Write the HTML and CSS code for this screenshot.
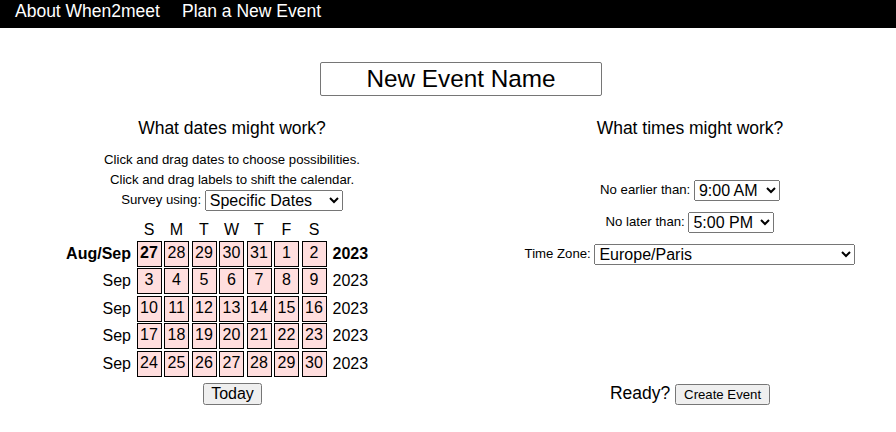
FILE: index.html
```html
<!DOCTYPE html>
<html>
<head>
<meta charset="utf-8">
<link rel="stylesheet" href="styles.css">
</head>
<body>
<div class="topbar">
  <a class="navlink" href="#">About When2meet</a>
  <a class="navlink" href="#">Plan a New Event</a>
</div>
<div class="name-row">
  <input class="name-input" type="text" value="New Event Name">
</div>
<div class="columns">
  <div class="col-left">
    <div class="heading">What dates might work?</div>
    <div class="hints">
      <div class="hint">Click and drag dates to choose possibilities.</div>
      <div class="hint">Click and drag labels to shift the calendar.</div>
    </div>
    <div class="survey">Survey using: <select class="sel sel-survey"><option>Specific Dates</option><option>Days of the Week</option></select></div>
    <div class="calendar">
      <div class="lbl"></div>
      <div class="dow">S</div><div class="dow">M</div><div class="dow">T</div><div class="dow">W</div><div class="dow">T</div><div class="dow">F</div><div class="dow">S</div>
      <div class="lbl"></div>

      <div class="mon bold">Aug/Sep</div>
      <div class="day bold">27</div><div class="day">28</div><div class="day">29</div><div class="day">30</div><div class="day">31</div><div class="day">1</div><div class="day">2</div>
      <div class="yr bold">2023</div>

      <div class="mon">Sep</div>
      <div class="day">3</div><div class="day">4</div><div class="day">5</div><div class="day">6</div><div class="day">7</div><div class="day">8</div><div class="day">9</div>
      <div class="yr">2023</div>

      <div class="mon">Sep</div>
      <div class="day">10</div><div class="day">11</div><div class="day">12</div><div class="day">13</div><div class="day">14</div><div class="day">15</div><div class="day">16</div>
      <div class="yr">2023</div>

      <div class="mon">Sep</div>
      <div class="day">17</div><div class="day">18</div><div class="day">19</div><div class="day">20</div><div class="day">21</div><div class="day">22</div><div class="day">23</div>
      <div class="yr">2023</div>

      <div class="mon">Sep</div>
      <div class="day">24</div><div class="day">25</div><div class="day">26</div><div class="day">27</div><div class="day">28</div><div class="day">29</div><div class="day">30</div>
      <div class="yr">2023</div>
    </div>
    <div class="today-row"><button class="btn btn-today">Today</button></div>
  </div>
  <div class="col-right">
    <div class="heading">What times might work?</div>
    <div class="times">
      <div class="trow">No earlier than: <select class="sel sel-time"><option>9:00 AM</option></select></div>
      <div class="trow">No later than: <select class="sel sel-time"><option>5:00 PM</option></select></div>
      <div class="trow">Time Zone: <select class="sel sel-tz"><option>Europe/Paris</option></select></div>
    </div>
    <div class="ready">Ready? <button class="btn btn-create">Create Event</button></div>
  </div>
</div>
</body>
</html>
```

FILE: styles.css
```css
html, body {
  margin: 0;
  padding: 0;
  background: #fff;
  overflow: hidden;
}
body {
  font-family: "Liberation Sans", Arial, sans-serif;
  color: #000;
  width: 896px;
  height: 432px;
}
.topbar {
  background: #000;
  height: 28px;
  display: flex;
  align-items: flex-start;
  gap: 22px;
  padding-left: 15px;
}
.navlink {
  color: #fff;
  text-decoration: none;
  font-size: 17.5px;
  line-height: 23px;
}
.name-row {
  display: flex;
  justify-content: center;
  margin-top: 34px;
  padding-left: 26px;
}
.name-input {
  box-sizing: border-box;
  width: 282px;
  height: 34px;
  border: 1px solid #767676;
  border-radius: 2px;
  font-family: "Liberation Sans", Arial, sans-serif;
  font-size: 24.3px;
  text-align: center;
  padding: 0;
  color: #000;
}
.columns {
  display: flex;
}
.col-left {
  width: 464px;
  flex: none;
}
.col-right {
  width: 432px;
  flex: none;
  padding-left: 20px;
  box-sizing: border-box;
}
.heading {
  text-align: center;
  font-size: 17.5px;
  line-height: 20px;
  margin-top: 22px;
}
.hints {
  margin-top: 12px;
}
.hint {
  text-align: center;
  font-size: 13.2px;
  line-height: 20px;
}
.survey {
  text-align: center;
  font-size: 13.2px;
  line-height: 20px;
}
.sel {
  font-family: "Liberation Sans", Arial, sans-serif;
  font-size: 16px;
  color: #000;
  vertical-align: middle;
}
.sel-survey { width: 138px; }
.sel-time { width: 86px; }
.sel-tz { width: 261px; }
.calendar {
  display: grid;
  grid-template-columns: 70px repeat(7, 25px) 42px;
  grid-auto-rows: 26px;
  grid-template-rows: 18px;
  column-gap: 2.5px;
  row-gap: 1.5px;
  margin-left: 64px;
  margin-top: 10px;
  font-size: 16px;
}
.dow {
  text-align: center;
  line-height: 18px;
}
.mon {
  text-align: right;
  padding-right: 3px;
  line-height: 26px;
}
.yr {
  padding-left: 3.5px;
  line-height: 26px;
}
.day {
  box-sizing: border-box;
  border: 1px solid #000;
  background: #ffdede;
  text-align: center;
  line-height: 22px;
}
.bold { font-weight: bold; }
.today-row {
  text-align: center;
  margin-top: 6px;
}
.btn {
  font-family: "Liberation Sans", Arial, sans-serif;
  color: #000;
}
.btn-today {
  font-size: 16px;
  height: 22px;
  line-height: 18px;
  padding: 0 6px;
  margin-left: 1px;
}
.btn-create {
  font-size: 13.2px;
  height: 21px;
  padding: 0 7px;
  vertical-align: middle;
}
.times {
  display: flex;
  flex-direction: column;
  align-items: center;
  gap: 11px;
  margin-top: 42px;
}
.trow {
  font-size: 13.2px;
  line-height: 20px;
  text-align: center;
}
.ready {
  text-align: center;
  font-size: 17.5px;
  line-height: 24px;
  margin-top: 116px;
}
```
